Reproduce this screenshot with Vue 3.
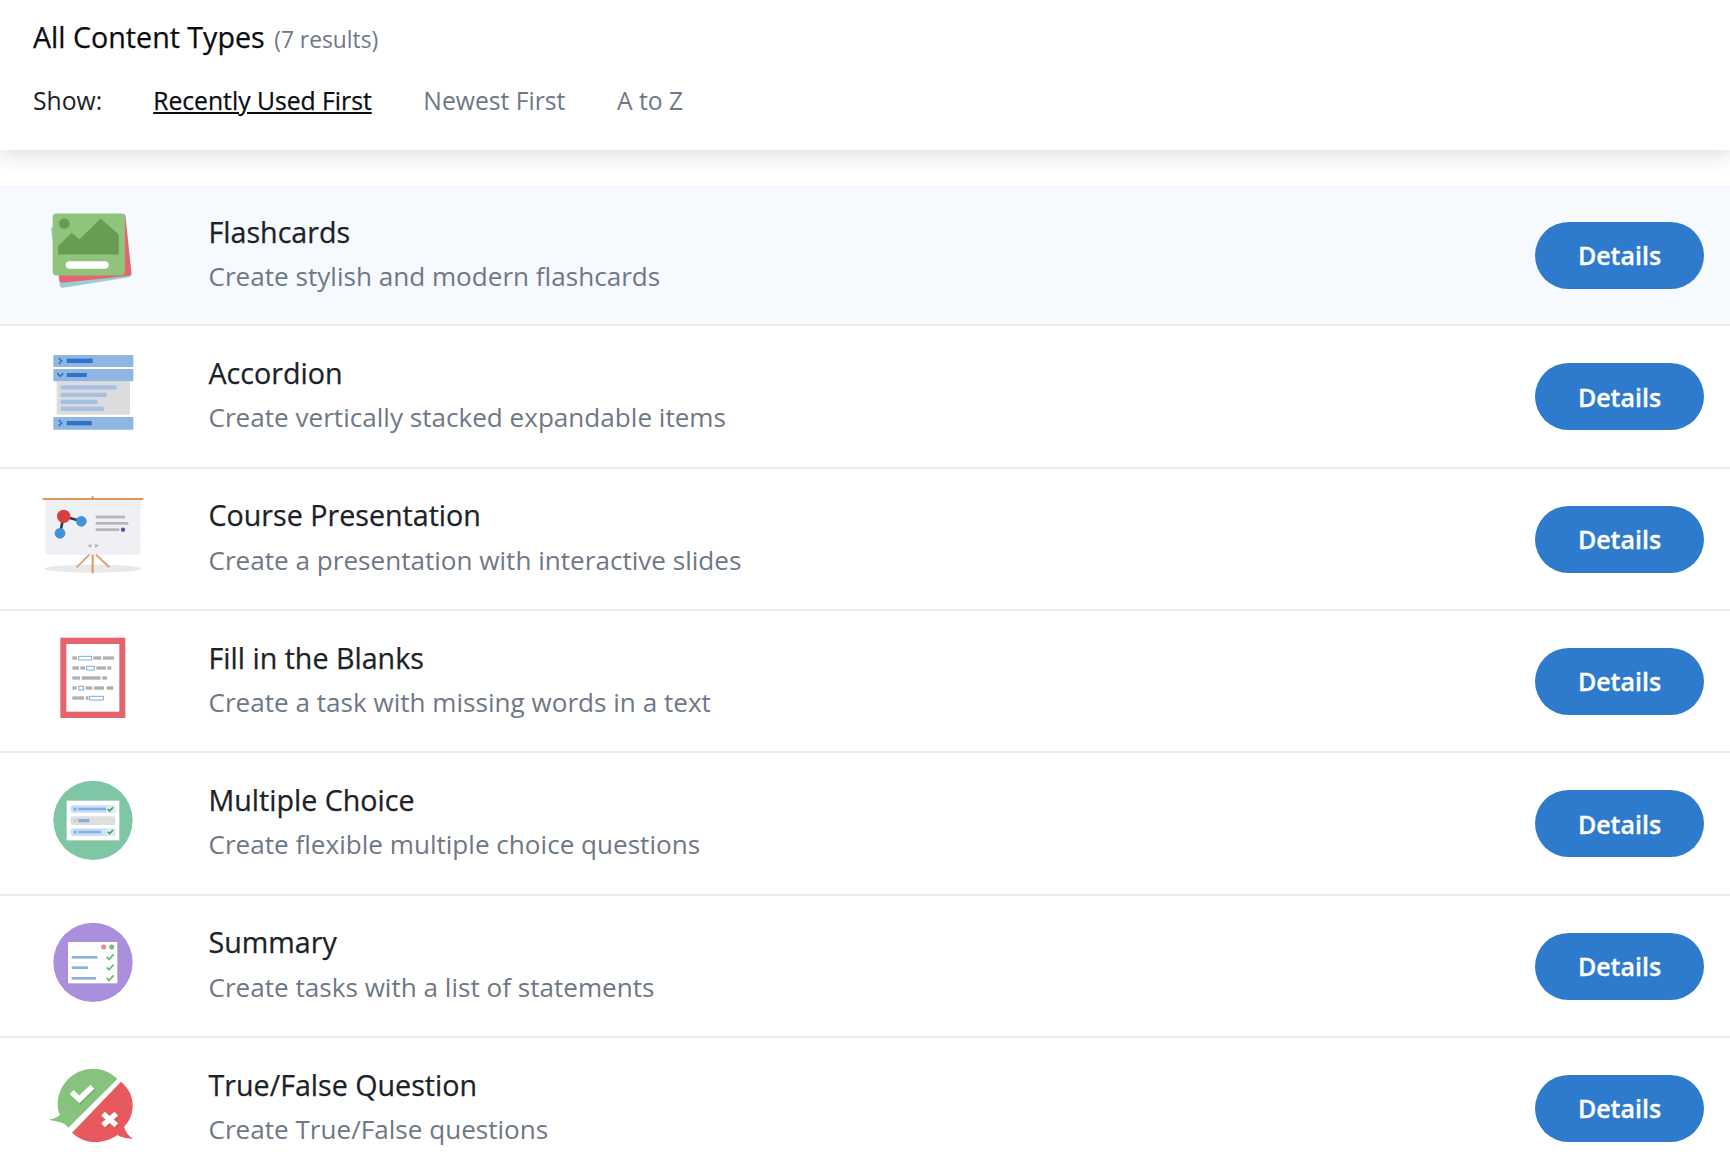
<script setup>
const rows = [
  { id: 'flash', title: 'Flashcards', desc: 'Create stylish and modern flashcards', vb: '69 37.5 240 240' },
  { id: 'acc', title: 'Accordion', desc: 'Create vertically stacked expandable items', vb: '69 28 240 240' },
  { id: 'course', title: 'Course Presentation', desc: 'Create a presentation with interactive slides', vb: '69 35 240 240' },
  { id: 'fill', title: 'Fill in the Blanks', desc: 'Create a task with missing words in a text', vb: '69 26 240 240' },
  { id: 'mc', title: 'Multiple Choice', desc: 'Create flexible multiple choice questions', vb: '69 32 240 240' },
  { id: 'sum', title: 'Summary', desc: 'Create tasks with a list of statements', vb: '69 24 240 240' },
  { id: 'tf', title: 'True/False Question', desc: 'Create True/False questions', vb: '69 22 240 240' }
]
const grey = [
  [127, 86, 14], [190, 86, 24], [219, 86, 33],
  [127, 116, 20], [151, 116, 14], [199, 116, 29], [232, 116, 12],
  [127, 146, 23], [155, 146, 57], [217, 146, 14],
  [127, 176, 13], [167, 176, 20], [192, 176, 30], [230, 176, 20],
  [127, 206, 35], [167, 206, 8]
]
const blanks = [[146, 81, 39], [170, 111, 23], [146, 171, 15], [178, 201, 42]]
</script>

<template>
  <div class="page">
    <header class="top">
      <h1 class="heading"><span class="strong">All Content Types</span> <span class="count">(7 results)</span></h1>
      <nav class="sort">
        <span class="show">Show:</span>
        <a class="link active">Recently Used First</a>
        <a class="link">Newest First</a>
        <a class="link">A to Z</a>
      </nav>
    </header>
    <ul class="list">
      <li v-for="(r, i) in rows" :key="r.id" class="row" :class="{ first: i === 0 }">
        <svg class="icon" :viewBox="r.vb" width="80" height="80">
          <g v-if="r.id === 'flash'">
            <rect x="68" y="42" width="217" height="186" rx="8" fill="#9accd8" transform="translate(7 22) rotate(-9 176 135)" />
            <rect x="68" y="42" width="217" height="186" rx="8" fill="#e5656a" transform="translate(11 12) rotate(-6 176 135)" />
            <rect x="68" y="42" width="217" height="186" rx="12" fill="#8fc47c" />
            <circle cx="103" cy="72" r="16" fill="#679c55" />
            <polygon points="84,165 84,140 125,100 148,120 212,57 266,105 266,165" fill="#679c55" />
            <rect x="107" y="185" width="129" height="23" rx="11.5" fill="#fff" />
          </g>
          <g v-else-if="r.id === 'acc'">
            <rect x="80" y="113" width="220" height="100" fill="#dcdcdc" />
            <rect x="70" y="34" width="240" height="36" rx="3" fill="#8fb5e3" />
            <rect x="70" y="76" width="240" height="37" rx="3" fill="#8fb5e3" />
            <rect x="70" y="220" width="240" height="38" rx="3" fill="#8fb5e3" />
            <rect x="110" y="45" width="78" height="13" fill="#2f74c4" />
            <rect x="110" y="88" width="60" height="12" fill="#2f74c4" />
            <rect x="110" y="232" width="75" height="13" fill="#2f74c4" />
            <g fill="none" stroke="#2f74c4" stroke-width="5">
              <path d="M86 43l9 9-9 9" />
              <path d="M82 89l9 9 9-9" />
              <path d="M86 229l9 9-9 9" />
            </g>
            <g fill="#a5c0e2">
              <rect x="92" y="125" width="168" height="13" />
              <rect x="92" y="147" width="138" height="13" />
              <rect x="92" y="168" width="110" height="13" />
              <rect x="92" y="189" width="130" height="13" />
            </g>
          </g>
          <g v-else-if="r.id === 'course'">
            <ellipse cx="188" cy="256" rx="145" ry="12" fill="#e8e9eb" />
            <rect x="46" y="50" width="286" height="164" fill="#eff0f3" />
            <rect x="38" y="44" width="302" height="6" fill="#e2955b" />
            <rect x="185" y="39" width="6" height="6" fill="#c98a5c" />
            <g stroke="#e2a26f" stroke-width="6" fill="none">
              <path d="M188 214V270" stroke="#e2955b" />
              <path d="M178 214L140 252" />
              <path d="M198 214L238 252" />
            </g>
            <path d="M101 99L154 114M101 99L90 150" stroke="#333c4a" stroke-width="8" />
            <circle cx="101" cy="99" r="20" fill="#d6403f" />
            <circle cx="154" cy="114" r="16" fill="#3e94d6" />
            <circle cx="90" cy="150" r="16" fill="#3e94d6" />
            <g fill="#b4b6bb">
              <rect x="197" y="97" width="88" height="8" />
              <rect x="197" y="116" width="98" height="8" />
              <rect x="197" y="135" width="71" height="8" />
              <polygon points="172,187 184,181 184,193" />
              <polygon points="207,187 195,181 195,193" />
            </g>
            <circle cx="279" cy="139" r="6.5" fill="#6a3fb0" />
          </g>
          <g v-else-if="r.id === 'fill'">
            <rect x="91" y="25" width="195" height="241" fill="#e5636a" />
            <rect x="109" y="44" width="159" height="203" fill="#fff" />
            <rect v-for="(g, n) in grey" :key="n" :x="g[0]" :y="g[1] - 5" :width="g[2]" height="10" fill="#b0b0b0" />
            <rect v-for="(b, n) in blanks" :key="'b' + n" :x="b[0]" :y="b[1]" :width="b[2]" height="11" fill="#fff" stroke="#7fabd9" stroke-width="3" />
          </g>
          <g v-else-if="r.id === 'mc'">
            <circle cx="189" cy="153" r="119" fill="#7fc6a4" />
            <rect x="110" y="94" width="158" height="119" fill="#fff" />
            <rect x="122" y="108" width="134" height="22" rx="6" fill="#c9dff7" />
            <rect x="122" y="141" width="134" height="26" rx="6" fill="#dedede" />
            <rect x="122" y="177" width="134" height="23" rx="6" fill="#c9dff7" />
            <rect x="228" y="108" width="28" height="22" fill="#d8eee8" />
            <rect x="228" y="177" width="28" height="23" fill="#d8eee8" />
            <g fill="#86aee2">
              <rect x="131" y="115" width="9" height="9" />
              <rect x="145" y="115" width="83" height="8" />
              <rect x="145" y="149" width="33" height="10" />
              <rect x="131" y="184" width="9" height="9" />
              <rect x="145" y="184" width="67" height="8" />
            </g>
            <rect x="131" y="149" width="9" height="9" fill="#c8c8c8" />
            <path d="M233 119l6 6 10-11M233 187l6 6 10-11" fill="none" stroke="#45906a" stroke-width="4.5" />
          </g>
          <g v-else-if="r.id === 'sum'">
            <circle cx="189" cy="145" r="119" fill="#a98fdc" />
            <rect x="114" y="84" width="148" height="124" fill="#fff" />
            <circle cx="221" cy="99" r="7.5" fill="#e58a8a" />
            <circle cx="245" cy="99" r="7.5" fill="#6cc082" />
            <path d="M114 114H262M114 146H262M114 178H262" stroke="#eeeeee" stroke-width="1.5" />
            <g fill="#8fb0de">
              <rect x="125" y="126" width="77" height="8" />
              <rect x="125" y="157" width="49" height="8" />
              <rect x="125" y="189" width="73" height="8" />
            </g>
            <path d="M230 129l7 7 14-15M230 160l7 7 14-15M230 192l7 7 14-15" fill="none" stroke="#6cc082" stroke-width="6" />
          </g>
          <g v-else>
            <path d="M262 64C240 42 215 33 190 33C130 33 83 82 83 140C83 152 85 163 90 172C80 180 68 185 55 186C75 190 95 192 108 202L115 210Z" fill="#86c47d" />
            <path d="M273 72C296 92 308 115 308 143C308 170 298 192 282 208C288 225 298 237 308 243C290 244 272 238 262 232C243 246 220 253 195 253C170 253 145 243 126 225Z" fill="#e5595f" />
            <path d="M128 107L151 129L190 91" fill="none" stroke="#5f9d57" stroke-width="17" opacity="0.5" />
            <path d="M125 103L148 125L187 87" fill="none" stroke="#fff" stroke-width="17" />
            <path d="M221 170L261 205M261 170L221 205" fill="none" stroke="#c9464c" stroke-width="16" opacity="0.4" transform="translate(2 3)" />
            <path d="M219 168L259 203M259 168L219 203" fill="none" stroke="#fff" stroke-width="16" />
          </g>
        </svg>
        <div class="text">
          <div class="title">{{ r.title }}</div>
          <div class="desc">{{ r.desc }}</div>
        </div>
        <button class="btn">Details</button>
      </li>
    </ul>
  </div>
</template>

<style>
html, body { margin: 0; overflow: hidden; background: #fff; }
</style>

<style scoped>
.page {
  height: 1161px;
  overflow: hidden;
  font-family: "Open Sans", sans-serif;
  color: #1c2227;
}
.top {
  height: 150px;
  box-sizing: border-box;
  padding: 17px 33px 0;
  background: #fff;
  box-shadow: 0 4px 20px rgba(40, 50, 60, 0.18);
  position: relative;
}
.heading {
  margin: 0;
  font-size: 28.65px;
  line-height: 40px;
  font-weight: 400;
  color: #0a0d10;
}
.strong { -webkit-text-stroke: 0.25px #0a0d10; }
.count { font-size: 22.8px; color: #6f7885; margin-left: 2px; }
.sort {
  display: flex;
  gap: 51.6px;
  margin-top: 23px;
  font-size: 24.7px;
  line-height: 36px;
  color: #6f7885;
}
.show { color: #1c2227; width: 68.6px; }
.active { color: #0a0d10; text-decoration: underline; -webkit-text-stroke: 0.25px #0a0d10; }
.list { margin: 35px 0 0; padding: 0; list-style: none; }
.row {
  display: flex;
  height: 142.35px;
  box-sizing: border-box;
  padding: 26.7px 26px 0 53px;
  border-bottom: 2px solid #e9ebed;
}
.first { background: #f6f9fd; height: 141.4px; }
.icon { width: 80px; height: 80px; flex: none; overflow: visible; }
.text { flex: 1; margin-left: 75.5px; }
.title { font-size: 28.65px; line-height: 40px; margin-top: -0.1px; -webkit-text-stroke: 0.25px #1c2227; }
.desc { font-size: 26.1px; line-height: 36px; margin-top: 6.4px; color: #6f7885; }
.btn {
  align-self: flex-start;
  width: 169px;
  height: 67px;
  margin-top: 10.2px;
  border: 0;
  border-radius: 34px;
  background: #2e7bcd;
  color: #fff;
  font: 600 25px "Open Sans", sans-serif;
  -webkit-text-stroke: 0.3px #fff;
}
</style>
